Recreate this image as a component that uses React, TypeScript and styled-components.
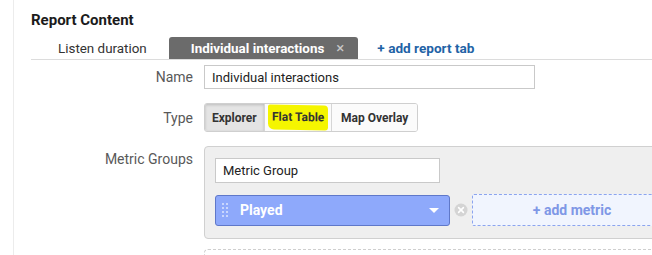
import React from "react";
import styled, { createGlobalStyle } from "styled-components";

const GlobalStyle = createGlobalStyle`
  body {
    margin: 0;
    background: #fff;
    font-family: Roboto, "Liberation Sans", sans-serif;
    color: #222;
  }
`;

type TypeOption = { label: string; pad: number; active?: boolean; marked?: boolean };

const typeOptions: TypeOption[] = [
  { label: "Explorer", pad: 7, active: true },
  { label: "Flat Table", pad: 7, marked: true },
  { label: "Map Overlay", pad: 9 },
];

const App: React.FC = () => {
  return (
    <>
      <GlobalStyle />
      <Page>
        <Title>Report Content</Title>
        <TabBar>
          <Tab>Listen duration</Tab>
          <Tab $active>
            Individual interactions
            <TabClose>×</TabClose>
          </Tab>
          <AddTab>+ add report tab</AddTab>
        </TabBar>

        <Form>
          <Label>Name</Label>
          <TextInput defaultValue="Individual interactions" $width={331} $height={24} />

          <Label>Type</Label>
          <ButtonGroup>
            {typeOptions.map((opt) => (
              <TypeButton key={opt.label} $active={opt.active} $pad={opt.pad}>
                {opt.marked ? <Marker>{opt.label}</Marker> : opt.label}
              </TypeButton>
            ))}
          </ButtonGroup>

          <Label $top>Metric Groups</Label>
          <div>
            <GroupPanel>
              <TextInput defaultValue="Metric Group" $width={225} $height={25} />
              <MetricRow>
                <MetricPill>
                  <DragHandle>
                    {Array.from({ length: 8 }).map((_, i) => (
                      <Dot key={i} />
                    ))}
                  </DragHandle>
                  <PillText>Played</PillText>
                  <Caret />
                </MetricPill>
                <RemoveIcon viewBox="0 0 14 14">
                  <circle cx="7" cy="7" r="6.5" fill="#d4d4d4" />
                  <path
                    d="M4.6 4.6 L9.4 9.4 M9.4 4.6 L4.6 9.4"
                    stroke="#fff"
                    strokeWidth="1.6"
                    strokeLinecap="round"
                  />
                </RemoveIcon>
                <AddMetric>+ add metric</AddMetric>
              </MetricRow>
            </GroupPanel>
            <NextGroup />
          </div>
        </Form>
      </Page>
    </>
  );
};

const Page = styled.div`
  margin-left: 13px;
  height: 255px;
  border-left: 1px solid #ececec;
  padding-left: 17px;
  overflow: hidden;
  box-sizing: border-box;
`;

const Title = styled.h2`
  margin: 0;
  padding-top: 10px;
  font-size: 15px;
  font-weight: 700;
  line-height: 20px;
  color: #1b1b1b;
`;

const TabBar = styled.div`
  display: flex;
  align-items: flex-end;
  margin-top: 7px;
  height: 22px;
  border-bottom: 1px solid #dcdcdc;
`;

const Tab = styled.div<{ $active?: boolean }>`
  display: flex;
  align-items: center;
  height: 22px;
  box-sizing: border-box;
  padding: ${({ $active }) => ($active ? "0 14px 0 22px" : "0 22px 0 27px")};
  font-size: 13.4px;
  font-weight: ${({ $active }) => ($active ? 700 : 400)};
  color: ${({ $active }) => ($active ? "#fff" : "#333")};
  background: ${({ $active }) => ($active ? "#6b6b6b" : "transparent")};
  border-radius: 3px 3px 0 0;
`;

const TabClose = styled.span`
  margin-left: 12px;
  font-size: 15px;
  font-weight: 400;
  color: #c8c8c8;
`;

const AddTab = styled.div`
  display: flex;
  align-items: center;
  height: 22px;
  margin-left: 19px;
  font-size: 13.6px;
  font-weight: 700;
  color: #1f63a6;
`;

const Form = styled.div`
  display: grid;
  grid-template-columns: 162px 1fr;
  column-gap: 11px;
  row-gap: 14px;
  align-items: center;
  margin-top: 5px;
`;

const Label = styled.div<{ $top?: boolean }>`
  text-align: right;
  font-size: 14px;
  color: #595959;
  align-self: ${({ $top }) => ($top ? "start" : "center")};
  padding-top: ${({ $top }) => ($top ? "5px" : "0")};
`;

const TextInput = styled.input<{ $width: number; $height: number }>`
  display: block;
  width: ${({ $width }) => $width}px;
  height: ${({ $height }) => $height}px;
  box-sizing: border-box;
  border: 1px solid #c9c9c9;
  background: #fff;
  padding: 0 7px;
  font-family: Roboto, "Liberation Sans", sans-serif;
  font-size: 13px;
  color: #222;
  outline: none;
`;

const ButtonGroup = styled.div`
  display: flex;
  width: max-content;
  border: 1px solid #cfcfcf;
  border-radius: 3px;
  overflow: hidden;
`;

const TypeButton = styled.div<{ $active?: boolean; $pad: number }>`
  display: flex;
  align-items: center;
  height: 27px;
  padding: 0 ${({ $pad }) => $pad}px;
  font-size: 12px;
  font-weight: 700;
  color: #333;
  background: ${({ $active }) => ($active ? "#e4e4e4" : "#fbfbfb")};
  box-shadow: ${({ $active }) =>
    $active ? "inset 0 1px 3px rgba(0,0,0,0.18)" : "none"};
  & + & {
    border-left: 1px solid #d6d6d6;
  }
`;

const Marker = styled.span`
  display: inline-block;
  margin: 0 -4px;
  padding: 5px 4px 6px;
  background: #f5f500;
  border-radius: 2px 4px 3px 6px;
  transform: skewY(1deg);
`;

const GroupPanel = styled.div`
  box-sizing: border-box;
  width: 520px;
  padding: 11px 10px 12px;
  background: #efefef;
  border: 1px solid #d0d0d0;
  border-radius: 4px;
`;

const MetricRow = styled.div`
  display: flex;
  align-items: center;
  margin-top: 11px;
`;

const MetricPill = styled.div`
  display: flex;
  flex: 0 0 235px;
  align-items: center;
  height: 31px;
  box-sizing: border-box;
  padding: 0 10px 0 6px;
  background: #8ea9fb;
  border: 1px solid #5f78c9;
  border-radius: 3px;
`;

const DragHandle = styled.div`
  display: grid;
  grid-template-columns: repeat(2, 2px);
  gap: 2px;
`;

const Dot = styled.span`
  width: 2px;
  height: 2px;
  background: #c9d6fd;
`;

const PillText = styled.span`
  flex: 1;
  margin-left: 12px;
  font-size: 14px;
  font-weight: 700;
  color: #fff;
`;

const Caret = styled.span`
  width: 0;
  height: 0;
  border-left: 5px solid transparent;
  border-right: 5px solid transparent;
  border-top: 5px solid #fff;
`;

const RemoveIcon = styled.svg`
  flex: 0 0 14px;
  height: 14px;
  margin-left: 4px;
`;

const AddMetric = styled.div`
  display: flex;
  align-items: center;
  justify-content: center;
  flex: 0 0 210px;
  height: 32px;
  box-sizing: border-box;
  margin-left: 4px;
  padding-right: 10px;
  background: #f1f5fe;
  border: 1px dashed #8ba4ef;
  border-radius: 2px;
  font-size: 14px;
  font-weight: 700;
  color: #7f98e6;
`;

const NextGroup = styled.div`
  margin-top: 10px;
  width: 520px;
  height: 20px;
  border: 1px dashed #cfcfcf;
  border-radius: 4px;
`;

export default App;
